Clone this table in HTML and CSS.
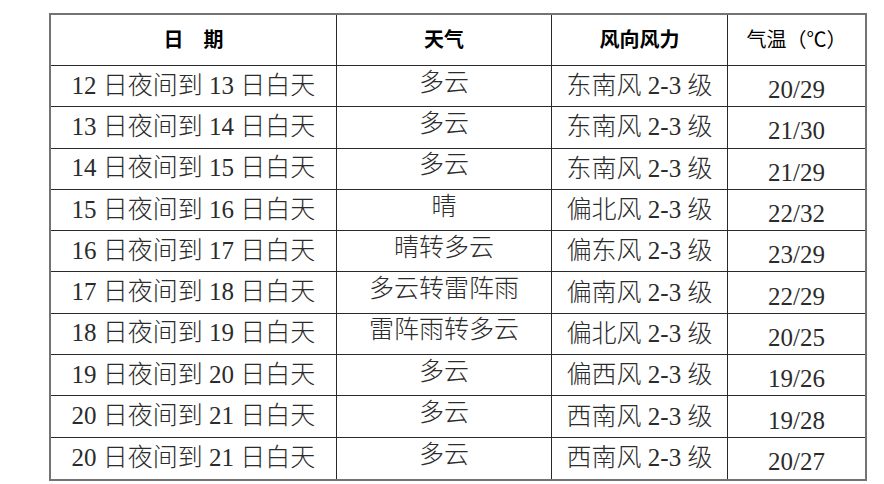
FILE: index.html
```html
<!DOCTYPE html>
<html lang="zh-CN">
<head>
<meta charset="utf-8">
<title>天气预报</title>
<link rel="stylesheet" href="styles.css">
</head>
<body>
<table class="forecast">
  <colgroup>
    <col class="c-date">
    <col class="c-weather">
    <col class="c-wind">
    <col class="c-temp">
  </colgroup>
  <thead>
    <tr class="head">
      <th class="h-date">日　期</th>
      <th>天气</th>
      <th>风向风力</th>
      <th class="h-temp">气温（℃）</th>
    </tr>
  </thead>
  <tbody>
    <tr><td class="date">12 日夜间到 13 日白天</td><td class="weather">多云</td><td class="wind">东南风 2-3 级</td><td class="temp">20/29</td></tr>
    <tr><td class="date">13 日夜间到 14 日白天</td><td class="weather">多云</td><td class="wind">东南风 2-3 级</td><td class="temp">21/30</td></tr>
    <tr><td class="date">14 日夜间到 15 日白天</td><td class="weather">多云</td><td class="wind">东南风 2-3 级</td><td class="temp">21/29</td></tr>
    <tr><td class="date">15 日夜间到 16 日白天</td><td class="weather">晴</td><td class="wind">偏北风 2-3 级</td><td class="temp">22/32</td></tr>
    <tr><td class="date">16 日夜间到 17 日白天</td><td class="weather">晴转多云</td><td class="wind">偏东风 2-3 级</td><td class="temp">23/29</td></tr>
    <tr><td class="date">17 日夜间到 18 日白天</td><td class="weather">多云转雷阵雨</td><td class="wind">偏南风 2-3 级</td><td class="temp">22/29</td></tr>
    <tr><td class="date">18 日夜间到 19 日白天</td><td class="weather">雷阵雨转多云</td><td class="wind">偏北风 2-3 级</td><td class="temp">20/25</td></tr>
    <tr><td class="date">19 日夜间到 20 日白天</td><td class="weather">多云</td><td class="wind">偏西风 2-3 级</td><td class="temp">19/26</td></tr>
    <tr><td class="date">20 日夜间到 21 日白天</td><td class="weather">多云</td><td class="wind">西南风 2-3 级</td><td class="temp">19/28</td></tr>
    <tr><td class="date">20 日夜间到 21 日白天</td><td class="weather">多云</td><td class="wind">西南风 2-3 级</td><td class="temp">20/27</td></tr>
  </tbody>
</table>
</body>
</html>
```
FILE: styles.css
```css
html, body {
  margin: 0;
  padding: 0;
  background: #ffffff;
}

body {
  padding: 13px 0 0 49px;
  font-family: "Liberation Serif", "Noto Sans CJK SC", serif;
}

.forecast {
  box-sizing: border-box;
  width: 818px;
  table-layout: fixed;
  border-collapse: separate;
  border-spacing: 0;
  border: 2px solid #737373;
}

.c-date { width: 286px; }
.c-weather { width: 215px; }
.c-wind { width: 176px; }
.c-temp { width: auto; }

.forecast th,
.forecast td {
  box-sizing: border-box;
  padding: 0;
  text-align: center;
  vertical-align: middle;
  border-right: 1px solid #2a2a2a;
  border-bottom: 1px solid #2a2a2a;
  white-space: nowrap;
  overflow: hidden;
}

.forecast th:last-child,
.forecast td:last-child {
  border-right: none;
}

.forecast tbody tr:last-child td {
  border-bottom: none;
}

.head {
  height: 51px;
}

.forecast th {
  font-size: 20px;
  font-weight: 700;
  color: #000000;
  line-height: 20px;
}

.forecast th.h-temp {
  font-weight: 400;
}

.forecast tbody tr {
  height: 41.3px;
}

.forecast td {
  font-size: 25px;
  line-height: 25px;
  color: #2b2b2b;
  font-weight: 300;
}

.forecast td.date {
  padding-bottom: 2px;
}

.forecast td.weather {
  padding-bottom: 8px;
}

.forecast td.wind {
  padding-bottom: 1px;
}

.forecast td.temp {
  padding-top: 7px;
}
```
